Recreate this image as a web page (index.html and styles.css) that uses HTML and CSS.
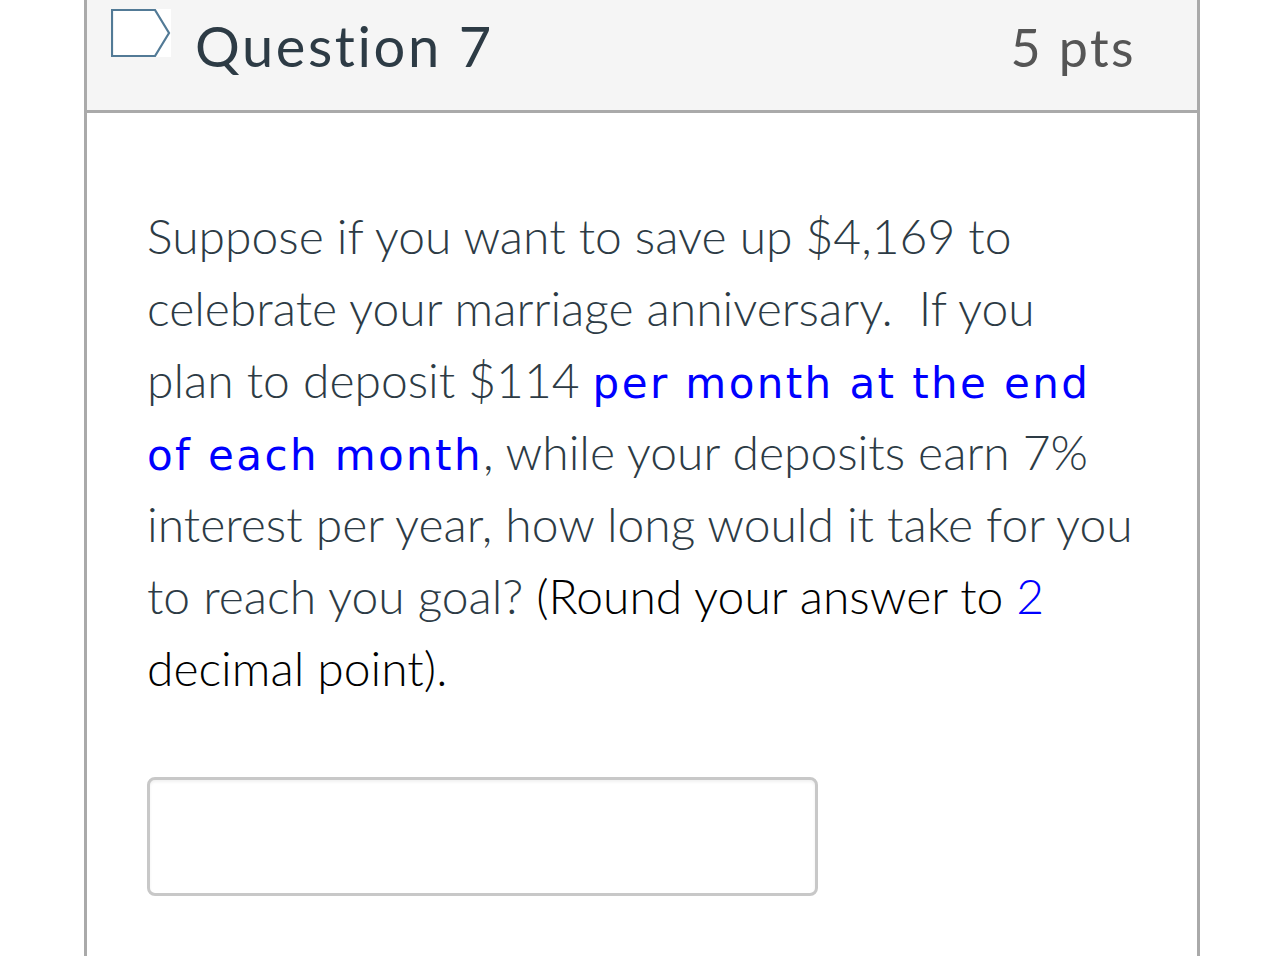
FILE: index.html
```html
<!DOCTYPE html>
<html>
<head>
<meta charset="utf-8">
<link rel="stylesheet" href="styles.css">
</head>
<body>
<div class="card">
  <div class="header">
    <div class="title">
      <svg class="flag" width="60" height="48" viewBox="0 0 60 48">
        <rect x="0" y="0" width="60" height="48" fill="#ffffff"/>
        <path d="M1 1 H44 L58 24 L44 47 H1 Z" fill="#ffffff" stroke="#527a96" stroke-width="2.2"/>
      </svg>
      <span class="name">Question 7</span>
    </div>
    <span class="pts">5 pts</span>
  </div>
  <div class="body">
    <p class="text">Suppose if you want to save up $4,169 to celebrate your marriage anniversary.&nbsp; If you<br>plan to deposit $114 <span class="hl">per month at the end of each month</span>, while your deposits earn 7% interest per year, how long would it take for you to reach you goal? <span class="dark">(Round your answer to <span class="num">2</span> decimal point).</span></p>
    <input class="answer" type="text">
  </div>
</div>
</body>
</html>
```
FILE: styles.css
```css
html, body {
  margin: 0;
  padding: 0;
  background: #ffffff;
}
body {
  font-family: Lato, "Noto Sans", sans-serif;
  color: #2d3b45;
}
.card {
  margin-left: 84px;
  width: 1110px;
  border: 3px solid #aaaaaa;
  border-top: 0;
  height: 990px;
}
.header {
  height: 110px;
  background: #f5f5f5;
  border-bottom: 3px solid #aaaaaa;
  display: flex;
  justify-content: space-between;
  align-items: flex-start;
  padding: 0 63px 0 24px;
}
.title {
  display: flex;
  align-items: flex-start;
}
.flag {
  display: block;
  margin-top: 9px;
}
.name {
  font-size: 56px;
  line-height: 1;
  letter-spacing: 2.6px;
  margin-left: 24px;
  margin-top: 18px;
  color: #2d3b45;
}
.pts {
  font-size: 52px;
  line-height: 1;
  letter-spacing: 2.4px;
  margin-top: 21px;
  margin-right: -2px;
  color: #555555;
}
.body {
  padding: 87px 58px 0 60px;
}
.text {
  margin: 0;
  font-size: 48px;
  line-height: 72px;
  font-weight: 300;
}
.hl {
  color: #0000ff;
  font-family: "DejaVu Sans", sans-serif;
  font-size: 42px;
  line-height: 1;
  letter-spacing: 2.4px;
  font-weight: 400;
}
.dark {
  color: #000000;
}
.num {
  color: #0000ff;
}
.answer {
  display: block;
  margin-top: 73px;
  width: 671px;
  height: 119px;
  box-sizing: border-box;
  border: 3px solid #c8c8c8;
  border-radius: 8px;
  box-shadow: inset 0 2px 3px rgba(0,0,0,0.06);
  background: #ffffff;
  outline: none;
  padding: 0;
}
```
